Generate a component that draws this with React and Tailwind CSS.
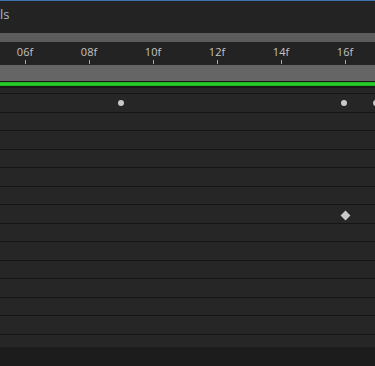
import React from "react";

const labels = ["06f", "08f", "10f", "12f", "14f", "16f"];
const rowCount = 14;

export default function App() {
  return (
    <div className="w-[375px] h-[366px] bg-[#1c1c1c] overflow-hidden flex flex-col" style={{ fontFamily: '"Open Sans", "DejaVu Sans", sans-serif' }}>
      {/* top panel header */}
      <div className="h-[33px] shrink-0 bg-[#232323] border-t border-[#3e6fae] flex items-start">
        <span className="mt-[5px] ml-[0px] text-[13px] leading-[16px] text-[#aab8cc]">ls</span>
      </div>
      {/* scroll bar */}
      <div className="h-[9px] shrink-0 bg-[#5c5c5c]" />
      {/* ruler */}
      <div className="h-[23px] shrink-0 bg-[#232323] flex">
        <div className="flex ml-[-7px]">
          {labels.map((l) => (
            <div key={l} className="w-[64px] flex flex-col items-center">
              <span className="mt-[3px] text-[11px] leading-[14px] text-[#c4c4c4]">{l}</span>
              <span className="mt-[1px] w-px h-[4px] bg-[#a8a8a8]" />
            </div>
          ))}
        </div>
      </div>
      {/* work area bar */}
      <div className="h-[16px] shrink-0 bg-[#656565]" />
      <div className="h-[1px] shrink-0 bg-[#1a1a1a]" />
      {/* green line */}
      <div className="h-[4px] shrink-0 bg-[#1fb51f] flex flex-col justify-center">
        <div className="h-[2px] bg-[#27cc27]" />
      </div>
      <div className="h-[2px] shrink-0 bg-[#181818]" />
      <div className="h-[5px] shrink-0 bg-[#262626]" />
      {/* rows */}
      <div className="flex flex-col shrink-0">
        {Array.from({ length: rowCount }).map((_, i) => (
          <div
            key={i}
            className={
              "relative shrink-0 border-t border-[#151515] bg-[#262626] " +
              (i === rowCount - 1 ? "h-[13.5px]" : "h-[18.5px]")
            }
          >
            {i === 0 && (
              <>
                <span className="absolute left-[118px] top-[6px] w-[6px] h-[6px] rounded-full bg-[#c9c9c9]" />
                <span className="absolute left-[341px] top-[6px] w-[6px] h-[6px] rounded-full bg-[#c9c9c9]" />
                <span className="absolute left-[373px] top-[6px] w-[6px] h-[6px] rounded-full bg-[#c9c9c9]" />
              </>
            )}
            {i === 6 && (
              <span className="absolute left-[342px] top-[7px] w-[7px] h-[7px] rotate-45 bg-[#c9c9c9]" />
            )}
          </div>
        ))}
      </div>
      <div className="flex-1 bg-[#1c1c1c]" />
    </div>
  );
}
